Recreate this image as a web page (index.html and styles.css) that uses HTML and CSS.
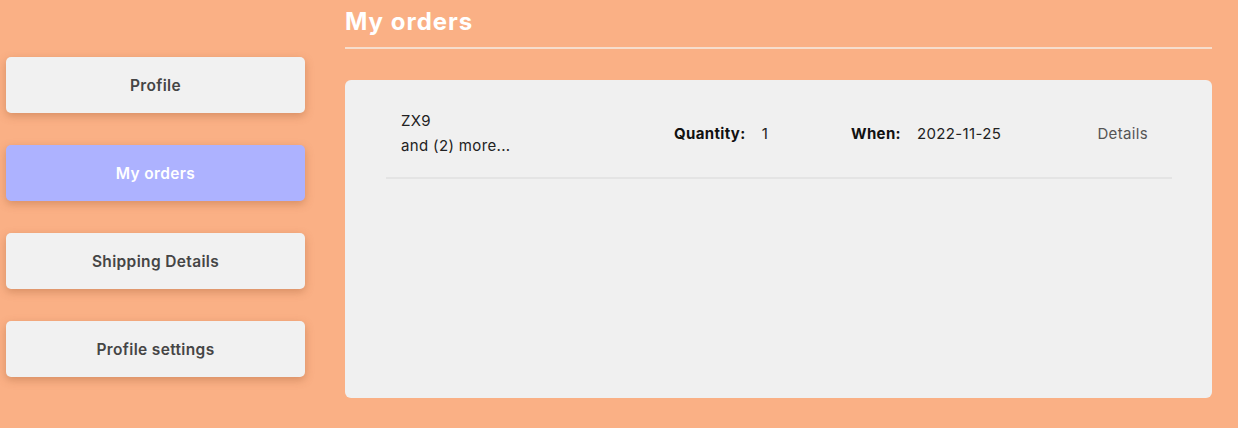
FILE: index.html
```html
<!DOCTYPE html>
<html>
<head>
<meta charset="utf-8">
<link rel="stylesheet" href="styles.css">
</head>
<body>
<div class="page">
  <nav class="sidebar">
    <button class="nav-btn">Profile</button>
    <button class="nav-btn active">My orders</button>
    <button class="nav-btn">Shipping Details</button>
    <button class="nav-btn">Profile settings</button>
  </nav>
  <main class="main">
    <h1 class="title">My orders</h1>
    <section class="card">
      <div class="order">
        <div class="order-name">
          <div>ZX9</div>
          <div>and (2) more...</div>
        </div>
        <div class="field"><span class="label">Quantity:</span><span>1</span></div>
        <div class="field"><span class="label">When:</span><span>2022-11-25</span></div>
        <div class="details">Details</div>
      </div>
    </section>
  </main>
</div>
</body>
</html>
```
FILE: styles.css
```css
* { box-sizing: border-box; }
html, body {
  margin: 0;
  background: #fab085;
  font-family: Inter, "Open Sans", sans-serif;
}
.page {
  display: flex;
  gap: 40px;
  padding: 0 26px 0 6px;
  height: 428px;
}
.sidebar {
  width: 299px;
  flex: none;
  display: flex;
  flex-direction: column;
  gap: 32px;
  padding-top: 57px;
}
.nav-btn {
  height: 56px;
  border: none;
  border-radius: 5px;
  background: #f1f1f1;
  color: #454545;
  font-family: inherit;
  font-size: 15.5px;
  font-weight: 600;
  letter-spacing: 0.35px;
  box-shadow: 0 3px 8px rgba(150, 80, 40, 0.35);
}
.nav-btn.active {
  background: #adb2ff;
  color: #ffffff;
}
.main {
  flex: 1;
  display: flex;
  flex-direction: column;
}
.title {
  margin: 0;
  padding-top: 7px;
  padding-bottom: 11px;
  font-size: 24px;
  line-height: 29px;
  font-weight: 700;
  letter-spacing: 1px;
  color: #ffffff;
  border-bottom: 2px solid #f6ddcc;
}
.card {
  margin-top: 31px;
  height: 318px;
  background: #f0f0f0;
  border-radius: 6px;
  padding: 0 40px 0 41px;
}
.order {
  display: grid;
  grid-template-columns: 273px 177px 1fr auto;
  align-items: center;
  padding: 28px 24px 19px 15px;
  border-bottom: 2px solid #e4e4e4;
  font-size: 15px;
  line-height: 25px;
  letter-spacing: 0.35px;
  color: #222;
}
.field {
  display: flex;
  gap: 16px;
}
.label {
  font-weight: 700;
  color: #111;
}
.details {
  color: #555;
}
```
